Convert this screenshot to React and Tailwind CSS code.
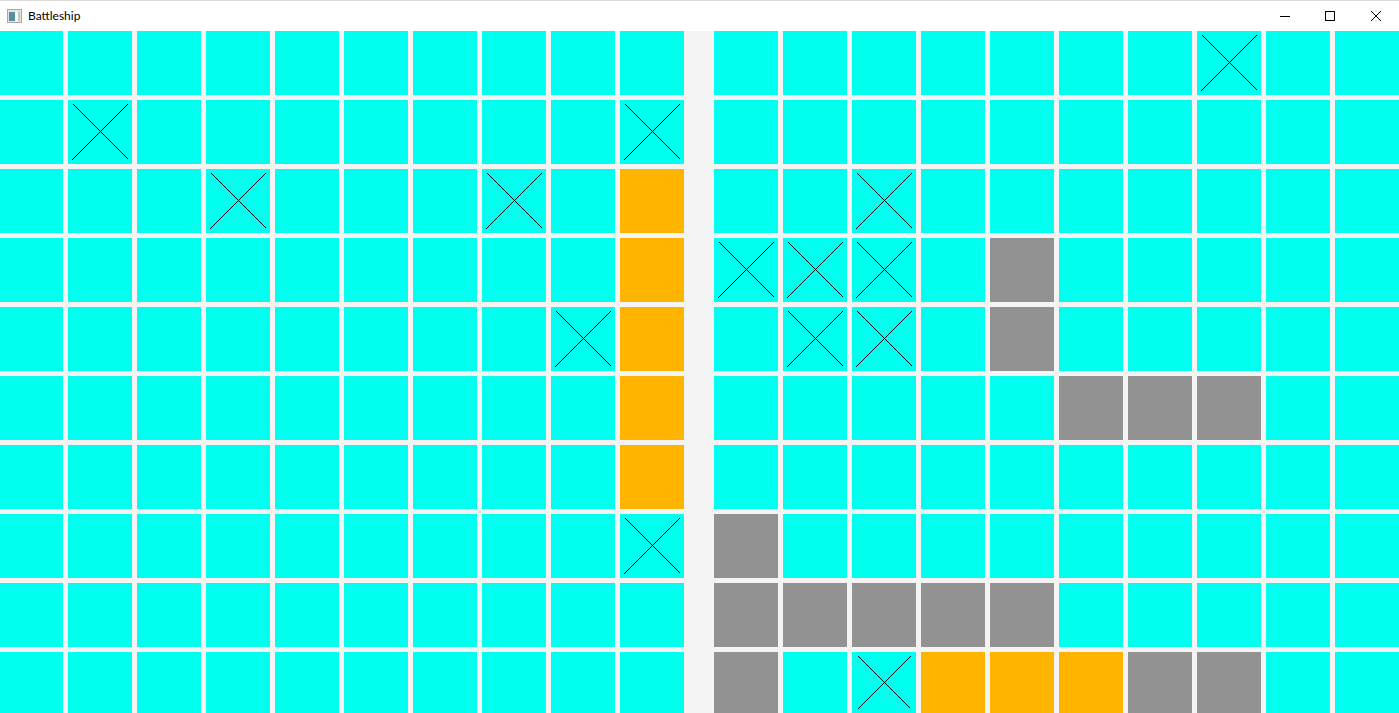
import React from 'react';

// . water, x miss, o hit, s own ship
const leftBoard = [
  '..........',
  '.x.......x',
  '...x...x.o',
  '.........o',
  '........xo',
  '.........o',
  '.........o',
  '.........x',
  '..........',
  '..........',
];

const rightBoard = [
  '.......x..',
  '..........',
  '..x.......',
  'xxx.s.....',
  '.xx.s.....',
  '.....sss..',
  '..........',
  's.........',
  'sssss.....',
  's.xoooss..',
];

function Cell({ value }) {
  if (value === 'o') return <div className="bg-[#ffb400]" />;
  if (value === 's') return <div className="bg-[#929292]" />;
  return (
    <div className="bg-[#00ffee]">
      {value === 'x' && (
        <svg
          className="block h-full w-full"
          viewBox="0 0 64 64"
          fill="none"
          stroke="#000"
          strokeWidth="1"
          shapeRendering="crispEdges"
        >
          <line x1="5" y1="4" x2="60" y2="59" />
          <line x1="4" y1="60" x2="60" y2="4" />
        </svg>
      )}
    </div>
  );
}

function Board({ rows, columns }) {
  return (
    <div className={`grid ${columns} grid-rows-[repeat(9,64px)_61px] gap-[5px]`}>
      {rows.map((row, r) =>
        row.split('').map((value, c) => <Cell key={`${r}-${c}`} value={value} />)
      )}
    </div>
  );
}

export default function App() {
  return (
    <div className="h-[713px] w-[1399px] overflow-hidden bg-[#f4f4f4]">
      <div className="flex h-[31px] items-center border-t border-[#dcdcdc] bg-white">
        <svg className="ml-[7px] h-[14px] w-[15px]" viewBox="0 0 15 14">
          <rect x="0.5" y="0.5" width="14" height="13" fill="#e4e4e4" stroke="#a9a9a9" />
          <rect x="2" y="3" width="6" height="9" fill="#55919a" />
          <rect x="8" y="3" width="3" height="9" fill="#ffffff" />
          <rect x="11" y="3" width="2" height="9" fill="#b4ccc0" />
        </svg>
        <span className="ml-[6px] font-['Lato',sans-serif] text-[12px] text-black">Battleship</span>
        <div className="ml-auto flex h-full">
          <div className="flex w-[44px] items-center justify-center">
            <div className="h-px w-[10px] bg-black" />
          </div>
          <div className="flex w-[46px] items-center justify-center">
            <div className="h-[10px] w-[10px] border border-black" />
          </div>
          <div className="flex w-[46px] items-center justify-center">
            <svg className="h-[10px] w-[10px]" viewBox="0 0 10 10" stroke="#000" strokeWidth="1">
              <line x1="0" y1="0" x2="10" y2="10" />
              <line x1="10" y1="0" x2="0" y2="10" />
            </svg>
          </div>
        </div>
      </div>
      <div className="flex gap-[30px]">
        <Board rows={leftBoard} columns="grid-cols-[63px_repeat(9,64px)]" />
        <Board rows={rightBoard} columns="grid-cols-[repeat(10,64px)]" />
      </div>
    </div>
  );
}
